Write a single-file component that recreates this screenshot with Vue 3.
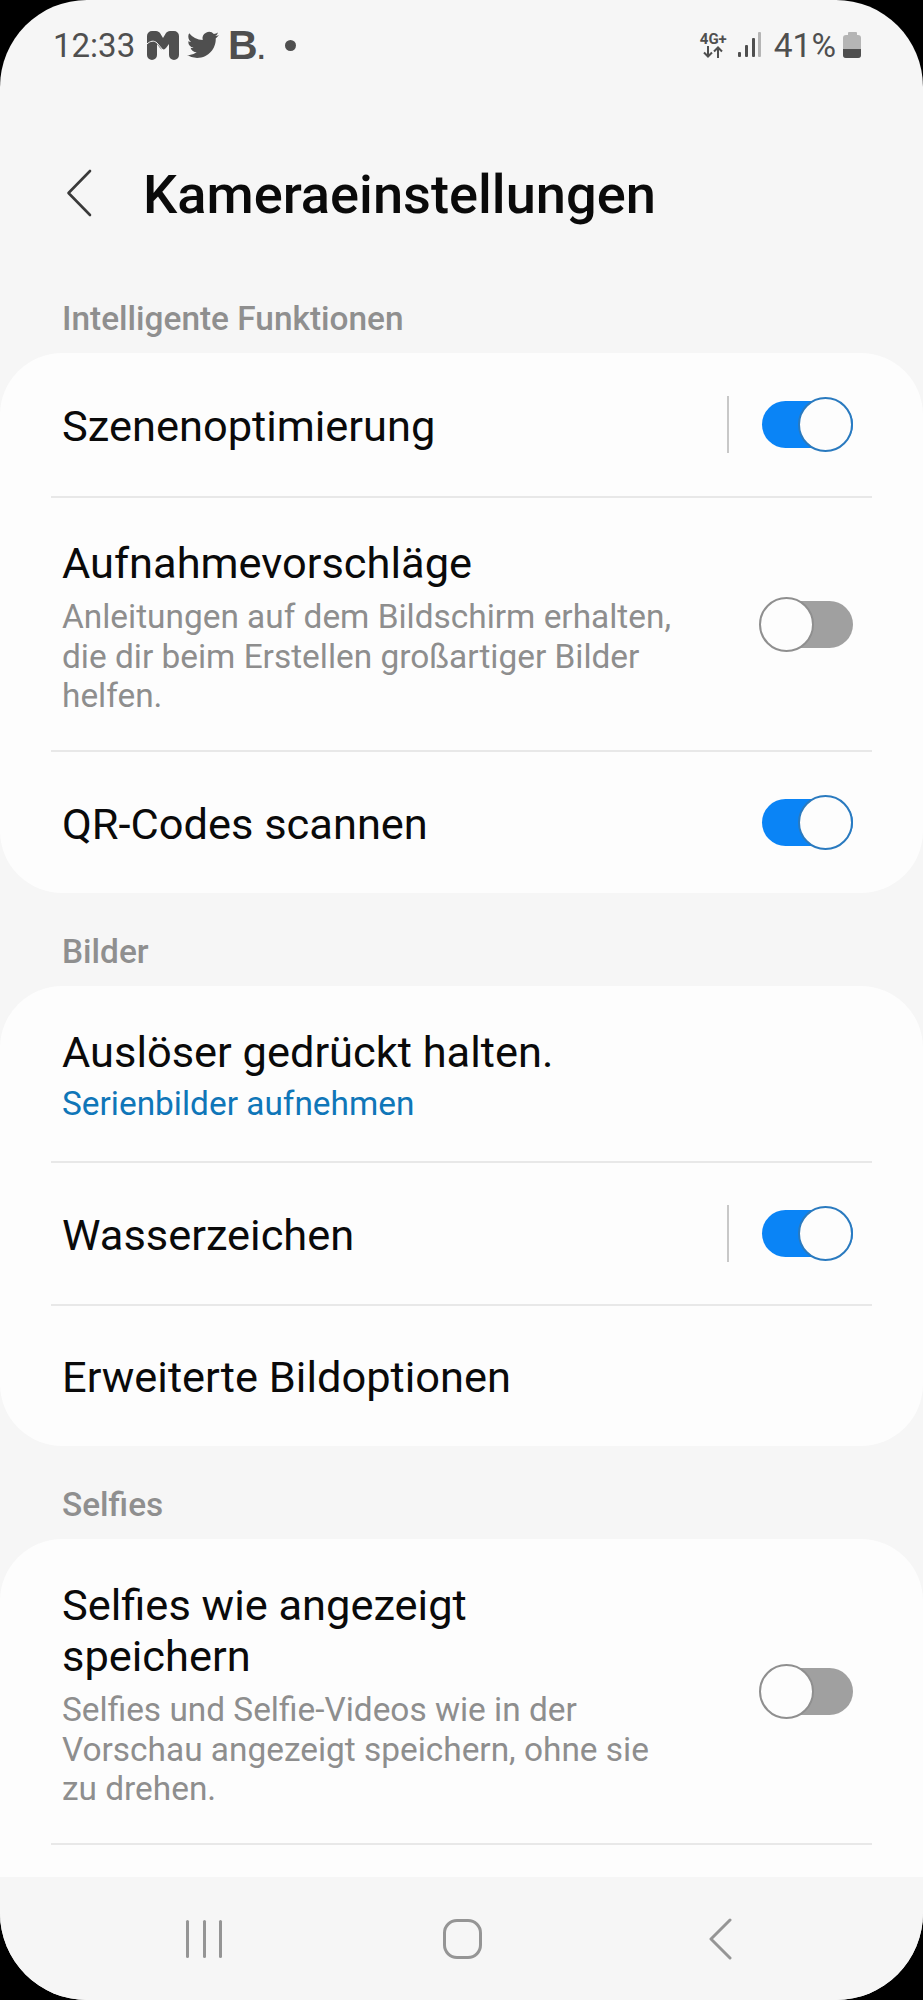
<script setup>
const sections = [
  {
    title: "Intelligente Funktionen",
    rows: [
      { label: "Szenenoptimierung", toggle: true, on: true, sep: true, h: 145 },
      {
        label: "Aufnahmevorschläge",
        sub: "Anleitungen auf dem Bildschirm erhalten, die dir beim Erstellen großartiger Bilder helfen.",
        toggle: true,
        on: false,
      },
      { label: "QR-Codes scannen", toggle: true, on: true, h: 141 },
    ],
  },
  {
    title: "Bilder",
    rows: [
      { label: "Auslöser gedrückt halten.", link: "Serienbilder aufnehmen" },
      { label: "Wasserzeichen", toggle: true, on: true, sep: true, h: 143 },
      { label: "Erweiterte Bildoptionen", h: 140 },
    ],
  },
  {
    title: "Selfies",
    rows: [
      {
        label: "Selfies wie angezeigt\nspeichern",
        sub: "Selfies und Selfie-Videos wie in der Vorschau angezeigt speichern, ohne sie zu drehen.",
        toggle: true,
        on: false,
      },
      { label: "", h: 143 },
    ],
  },
]
</script>

<template>
  <div class="phone">
    <div class="status">
      <div class="status-left">
        <span class="time">12:33</span>
        <svg class="ic-m" viewBox="0 0 32 29" width="32" height="29">
          <path d="M0 5a5 5 0 0 1 5-5h4c2 0 3 1 4 2l3 5 3-5c1-1 2-2 4-2h4a5 5 0 0 1 5 5v19a5 5 0 0 1-10 0V13l-3 4c-2 2-4 2-6 0l-3-4v11a5 5 0 0 1-10 0z" fill="#4f4f4f" />
          <path d="M0 13c3-3 7-4 10-1l6 7" fill="none" stroke="#f6f6f6" stroke-width="1" />
        </svg>
        <svg class="ic-tw" viewBox="0 0 24 24" width="32" height="32">
          <path d="M23.95 4.57a10 10 0 0 1-2.82.77 4.96 4.96 0 0 0 2.16-2.72c-.95.55-2 .95-3.13 1.18a4.92 4.92 0 0 0-8.38 4.48A13.98 13.98 0 0 1 1.64 3.16a4.82 4.82 0 0 0-.66 2.47c0 1.71.87 3.21 2.19 4.1a4.9 4.9 0 0 1-2.23-.61v.06a4.92 4.92 0 0 0 3.95 4.83 5 5 0 0 1-2.21.08 4.94 4.94 0 0 0 4.6 3.42A9.87 9.87 0 0 1 0 19.54a14 14 0 0 0 7.56 2.21c9.05 0 14-7.5 14-13.98 0-.21 0-.42-.02-.63a9.94 9.94 0 0 0 2.41-2.57z" fill="#4f4f4f" />
        </svg>
        <span class="logo-b">B<i>.</i></span>
        <span class="dot"></span>
      </div>
      <div class="status-right">
        <div class="net">
          <span>4G+</span>
          <svg viewBox="0 0 22 12" width="22" height="12">
            <path d="M6 0v10M2 6.500 6 10.500 10 6.500M16 12V2M12 5.500 16 1.500 20 5.500" fill="none" stroke="#4f4f4f" stroke-width="2" />
          </svg>
        </div>
        <svg class="signal" viewBox="0 0 24 26" width="24" height="26">
          <rect x="0" y="20" width="3" height="5" rx="1" fill="#4f4f4f" />
          <rect x="7" y="13" width="3" height="12" rx="1" fill="#4f4f4f" />
          <rect x="14" y="6" width="3" height="19" rx="1" fill="#4f4f4f" />
          <rect x="20" y="0" width="3" height="25" rx="1" fill="#b5b5b5" />
        </svg>
        <span class="pct">41%</span>
        <div class="battery"><span class="cap"></span><span class="body"><span class="fill"></span></span></div>
      </div>
    </div>

    <div class="header">
      <svg class="back" viewBox="0 0 26 48" width="26" height="48">
        <path d="M24 2 2.500 24 24 46" fill="none" stroke="#3a3a3a" stroke-width="2.600" stroke-linecap="round" stroke-linejoin="round" />
      </svg>
      <h1>Kameraeinstellungen</h1>
    </div>

    <div class="content">
      <template v-for="s in sections" :key="s.title">
        <div class="sec-title">{{ s.title }}</div>
        <div class="card">
          <div
            v-for="(r, i) in s.rows"
            :key="i"
            class="row"
            :class="{ fixed: r.h }"
            :style="r.h ? { height: r.h + 'px' } : null"
          >
            <div class="text">
              <div class="label">{{ r.label }}</div>
              <div v-if="r.sub" class="sub">{{ r.sub }}</div>
              <div v-if="r.link" class="link">{{ r.link }}</div>
            </div>
            <span v-if="r.sep" class="vsep"></span>
            <span v-if="r.toggle" class="toggle" :class="{ on: r.on }"><span class="thumb"></span></span>
          </div>
        </div>
      </template>
    </div>

    <div class="nav">
      <div class="recents"><span></span><span></span><span></span></div>
      <div class="home"></div>
      <svg viewBox="0 0 24 42" width="24" height="42">
        <path d="M22 2 3 21l19 19" fill="none" stroke="#959595" stroke-width="3" stroke-linecap="round" stroke-linejoin="round" />
      </svg>
    </div>
  </div>
</template>

<style>
html, body { background: #000; }
</style>

<style scoped>
.phone {
  width: 923px;
  height: 2000px;
  display: flex;
  flex-direction: column;
  background: #f6f6f6;
  border-radius: 87px;
  overflow: hidden;
  font-family: Roboto, "Liberation Sans", sans-serif;
  color: #0a0a0a;
}
.status {
  flex: none;
  height: 90px;
  padding: 0 62px 0 53px;
  display: flex;
  justify-content: space-between;
  align-items: center;
  color: #4f4f4f;
}
.status-left, .status-right { display: flex; align-items: center; }
.time { font-size: 33px; width: 94px; }
.ic-m { margin-top: 1px; }
.ic-tw { margin-left: 8px; }
.logo-b { margin-left: 9px; font-size: 41px; font-weight: 700; line-height: 1; font-family: "Liberation Sans", sans-serif; }
.logo-b i { font-style: normal; font-size: 27px; }
.dot { width: 11px; height: 11px; border-radius: 50%; background: #4f4f4f; margin-left: 20px; }
.net { display: flex; flex-direction: column; align-items: center; font-size: 15px; font-weight: 700; line-height: 14px; }
.signal { margin-left: 11px; }
.pct { font-size: 33.500px; margin-left: 12px; }
.battery { margin-left: 7px; display: flex; flex-direction: column; align-items: center; }
.cap { width: 9px; height: 3px; background: #b5b5b5; border-radius: 1px 1px 0 0; }
.body { width: 18px; height: 23px; border-radius: 3px; background: #b5b5b5; display: flex; align-items: flex-end; overflow: hidden; }
.fill { width: 100%; height: 9px; background: #4f4f4f; }
.header {
  flex: none;
  height: 208px;
  padding-left: 66px;
  display: flex;
  align-items: center;
}
.back { margin-bottom: 3px; }
.header h1 {
  margin: 0 0 0 51px;
  font-size: 54.200px;
  font-weight: 500;
}
.content { flex: 1; min-height: 0; overflow: hidden; }
.sec-title {
  height: 42px;
  line-height: 42px;
  margin-bottom: 13px;
  padding: 0 62px;
  font-size: 33.400px;
  font-weight: 500;
  color: #8f8f8f;
}
.card { background: #fdfdfd; border-radius: 62px; margin-bottom: 38px; }
.row {
  display: flex;
  align-items: center;
  margin: 0 51px;
  padding: 0 11px;
  border-bottom: 2px solid #e8e8e8;
  box-sizing: border-box;
}
.row:last-child { border-bottom: none; }
.text { flex: 1; min-width: 0; padding: 40px 80px 37.500px 0; }
.row:first-child .text { padding-top: 41px; }
.row.fixed .text { padding-top: 3px; padding-bottom: 0; }
.label { font-size: 43.400px; line-height: 51px; white-space: pre-line; }
.sub { margin: 8px 0 -3px; font-size: 33.400px; line-height: 39.500px; color: #8e8e8e; }
.link { margin-top: 6px; font-size: 33.400px; line-height: 39.500px; color: #0f76b8; }
.vsep { width: 2px; height: 57px; background: #c8c8c8; margin-right: 33px; }
.toggle {
  position: relative;
  flex: none;
  width: 91px;
  height: 47px;
  margin-right: 8px;
  border-radius: 24px;
  background: #a0a0a0;
}
.toggle.on { background: #0a84f6; }
.thumb {
  position: absolute;
  top: -4px;
  left: -3px;
  width: 55px;
  height: 55px;
  box-sizing: border-box;
  border-radius: 50%;
  background: #fdfdfd;
  border: 2.500px solid #8f8f8f;
}
.toggle.on .thumb { left: auto; right: 0; border-color: #2a7abf; }
.nav {
  flex: none;
  height: 123px;
  display: flex;
  justify-content: space-between;
  align-items: center;
  padding: 0 191px 0 186px;
  background: #f6f6f6;
}
.recents { display: flex; gap: 13.500px; }
.recents span { width: 3px; height: 38px; border-radius: 2px; background: #959595; }
.home { width: 39px; height: 40px; margin-right: 5px; box-sizing: border-box; border: 3.500px solid #959595; border-radius: 14px; }
</style>
